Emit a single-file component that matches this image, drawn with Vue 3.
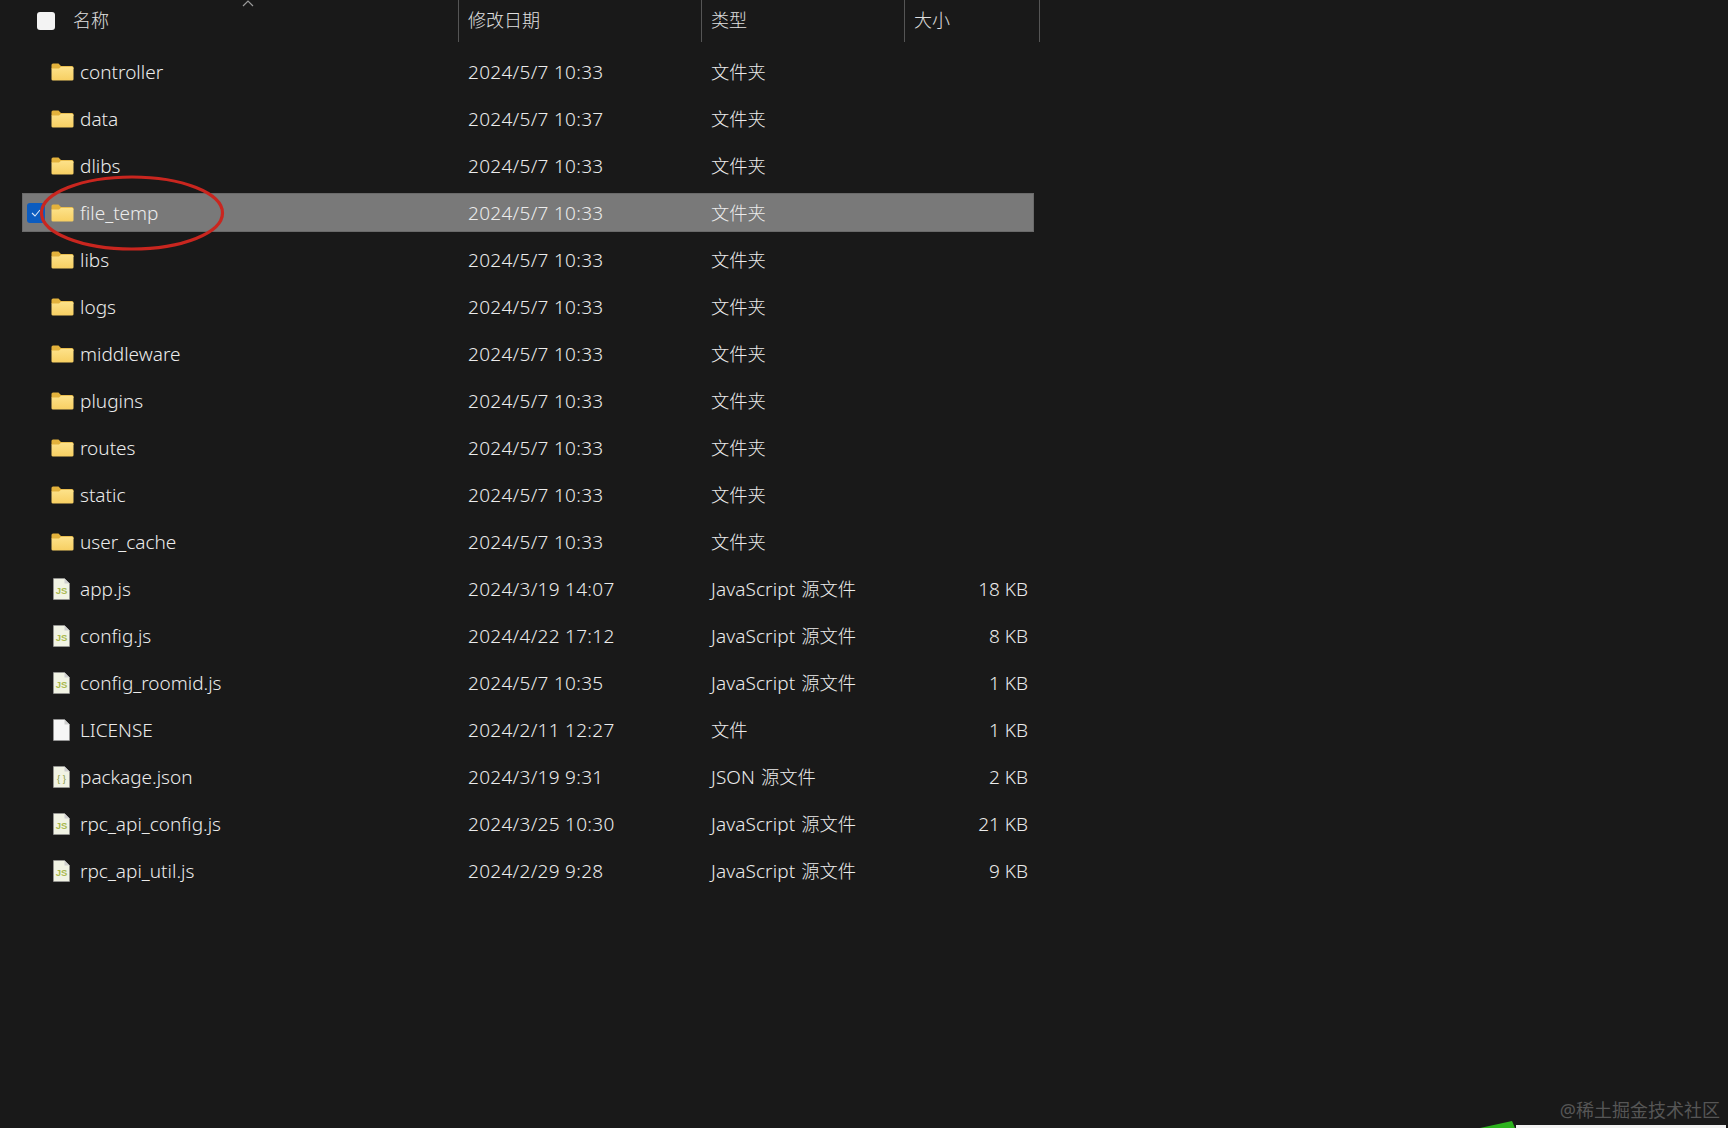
<script setup>
const rows = [
  { name: 'controller', date: '2024/5/7 10:33', type: '文件夹', kind: 'folder' },
  { name: 'data', date: '2024/5/7 10:37', type: '文件夹', kind: 'folder' },
  { name: 'dlibs', date: '2024/5/7 10:33', type: '文件夹', kind: 'folder' },
  { name: 'file_temp', date: '2024/5/7 10:33', type: '文件夹', kind: 'folder', selected: true },
  { name: 'libs', date: '2024/5/7 10:33', type: '文件夹', kind: 'folder' },
  { name: 'logs', date: '2024/5/7 10:33', type: '文件夹', kind: 'folder' },
  { name: 'middleware', date: '2024/5/7 10:33', type: '文件夹', kind: 'folder' },
  { name: 'plugins', date: '2024/5/7 10:33', type: '文件夹', kind: 'folder' },
  { name: 'routes', date: '2024/5/7 10:33', type: '文件夹', kind: 'folder' },
  { name: 'static', date: '2024/5/7 10:33', type: '文件夹', kind: 'folder' },
  { name: 'user_cache', date: '2024/5/7 10:33', type: '文件夹', kind: 'folder' },
  { name: 'app.js', date: '2024/3/19 14:07', lang: 'JavaScript', type: '源文件', size: '18 KB', kind: 'js' },
  { name: 'config.js', date: '2024/4/22 17:12', lang: 'JavaScript', type: '源文件', size: '8 KB', kind: 'js' },
  { name: 'config_roomid.js', date: '2024/5/7 10:35', lang: 'JavaScript', type: '源文件', size: '1 KB', kind: 'js' },
  { name: 'LICENSE', date: '2024/2/11 12:27', type: '文件', size: '1 KB', kind: 'blank' },
  { name: 'package.json', date: '2024/3/19 9:31', lang: 'JSON', type: '源文件', size: '2 KB', kind: 'json' },
  { name: 'rpc_api_config.js', date: '2024/3/25 10:30', lang: 'JavaScript', type: '源文件', size: '21 KB', kind: 'js' },
  { name: 'rpc_api_util.js', date: '2024/2/29 9:28', lang: 'JavaScript', type: '源文件', size: '9 KB', kind: 'js' }
]
</script>

<template>
  <div class="page">
    <div class="table">
      <div class="head">
        <div class="hcell hname">
          <span class="hcheck"></span>
          <span>名称</span>
          <svg class="sort" width="12" height="7" viewBox="0 0 12 7"><path d="M1 6 L6 1 L11 6" fill="none" stroke="#9a9a9a" stroke-width="1.2" /></svg>
        </div>
        <div class="hcell sep">修改日期</div>
        <div class="hcell sep">类型</div>
        <div class="hcell sep last">大小</div>
      </div>
      <div class="list">
        <div v-for="r in rows" :key="r.name" class="row" :class="{ selected: r.selected }">
          <div class="cname">
            <span v-if="r.selected" class="rcheck">
              <svg width="10" height="8" viewBox="0 0 10 8"><path d="M1 4 L4 7 L9 1" fill="none" stroke="#d8e6f8" stroke-width="1.1" /></svg>
            </span>
            <svg v-if="r.kind === 'folder'" class="ficon" width="23" height="18" viewBox="0 0 23 18">
              <defs>
                <linearGradient id="folderFront" x1="0" y1="0" x2="0" y2="1">
                  <stop offset="0" stop-color="#fde28a" />
                  <stop offset="1" stop-color="#f7cf62" />
                </linearGradient>
              </defs>
              <path d="M0.5 2 Q0.5 0.5 2 0.5 H7.5 L10 3 H21 Q22.5 3 22.5 4.5 V6 H0.5 Z" fill="#e3b23c" />
              <path d="M0.5 5.5 H8 L10 3.8 H21 Q22.5 3.8 22.5 5.3 V16.3 Q22.5 17.5 21 17.5 H2 Q0.5 17.5 0.5 16.3 Z" fill="url(#folderFront)" />
            </svg>
            <svg v-else class="dicon" width="17" height="22" viewBox="0 0 17 22">
              <path d="M0.5 0.5 H11.5 L16.5 5.5 V21.5 H0.5 Z" :fill="r.kind === 'blank' ? '#f6f6f6' : '#f1f3e4'" stroke="#9d9d9d" stroke-width="0.6" />
              <path d="M11.5 0.5 V5.5 H16.5 Z" fill="#cfcfcf" />
              <text v-if="r.kind === 'js'" x="8.5" y="16" class="jsmark">JS</text>
              <text v-if="r.kind === 'json'" x="8.5" y="16" class="jsmark thin">{ }</text>
            </svg>
            <span class="nm">{{ r.name }}</span>
          </div>
          <div class="cdate">{{ r.date }}</div>
          <div class="ctype"><span v-if="r.lang" class="lang">{{ r.lang }}</span><span class="cjk">{{ r.type }}</span></div>
          <div class="csize">{{ r.size }}</div>
        </div>
      </div>
    </div>

    <svg class="circle" width="200" height="90" viewBox="0 0 200 90">
      <ellipse cx="92" cy="43" rx="90.5" ry="36" fill="none" stroke="#c9261f" stroke-width="3.2" />
    </svg>
    <div class="mark">@稀土掘金技术社区</div>
    <div class="corner">
      <svg width="36" height="7" viewBox="0 0 36 7"><path d="M0 7 L32 0 L35 7 Z" fill="#2db31e" /></svg>
      <span class="bar"></span>
    </div>
  </div>
</template>

<style>
html, body { margin: 0; background: #191919; }
</style>

<style scoped>
.page {
  position: relative;
  width: 1728px;
  height: 1128px;
  overflow: hidden;
  background: #191919;
  color: #ececec;
  font-family: "Noto Sans", "Noto Sans CJK SC", sans-serif;
  font-size: 19px;
  font-weight: 300;
}
.table { margin-left: 22px; width: 1021px; }
.head {
  display: grid;
  grid-template-columns: 436px 243px 203px 136px;
  height: 42px;
  color: #e0e0e0;
  font-size: 18px;
}
.hcell { display: flex; align-items: center; padding-left: 9px; padding-bottom: 4px; }
.hname { position: relative; padding-left: 15px; gap: 18px; }
.sep { border-left: 1px solid #555; }
.last { border-right: 1px solid #555; }
.hcheck { width: 18px; height: 18px; border-radius: 3px; background: #f3f3f3; margin-top: 4px; }
.sort { position: absolute; left: 220px; top: 0; }
.list { display: flex; flex-direction: column; gap: 8px; margin-top: 10px; width: 1012px; }
.row {
  display: grid;
  grid-template-columns: 436px 243px 203px 130px;
  height: 39px;
  align-items: center;
}
.selected { background: #797979; box-shadow: inset 0 0 0 1px #6a6a6a; }
.cname { position: relative; display: flex; align-items: center; padding-left: 29px; height: 100%; }
.rcheck {
  position: absolute;
  left: 5px;
  top: 10px;
  width: 18px;
  height: 20px;
  border-radius: 3px;
  background: #0b5cc0;
  display: flex;
  align-items: center;
  justify-content: center;
}
.ficon { flex: none; }
.dicon { flex: none; margin-left: 2px; margin-right: 4px; }
.jsmark { font-family: "Liberation Sans", sans-serif; font-size: 9.5px; font-weight: 700; fill: #a8b84e; text-anchor: middle; }
.thin { font-weight: 400; fill: #8a9a3a; }
.nm { margin-left: 6px; }
.cdate { padding-left: 10px; letter-spacing: 0.3px; }
.ctype { padding-left: 10px; }
.cjk { font-size: 18.3px; }
.lang { letter-spacing: 0.1px; margin-right: 6px; }
.csize { text-align: right; padding-right: 6px; }
.circle { position: absolute; left: 40px; top: 170px; }
.mark {
  position: absolute;
  right: 8px;
  bottom: 6px;
  color: #565656;
  font-size: 18px;
  font-weight: 400;
}
.corner { position: absolute; left: 1480px; bottom: 0; width: 246px; height: 7px; display: flex; align-items: flex-end; }
.corner svg { flex: none; }
.bar { width: 210px; height: 3px; background: #f2f2f2; }
</style>
